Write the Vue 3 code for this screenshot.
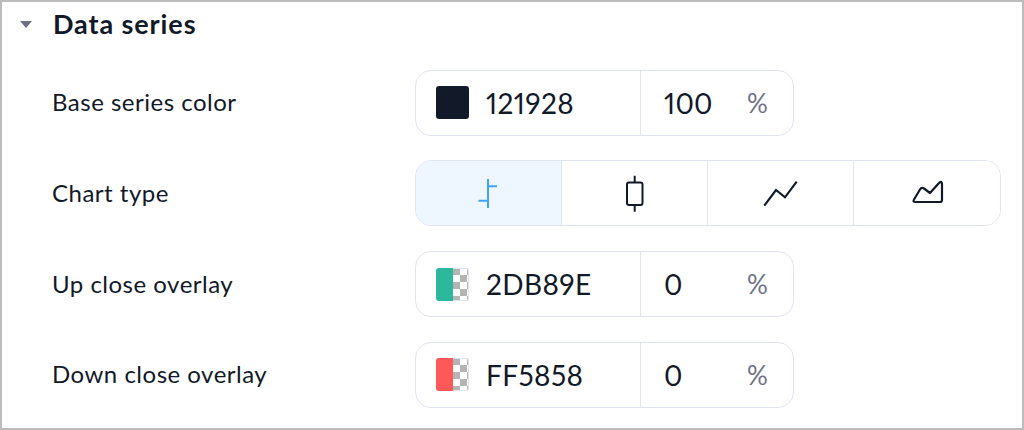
<template>
  <section class="panel">
    <header class="panel-head">
      <span class="caret"></span>
      <h2 class="title">Data series</h2>
    </header>

    <div class="rows">
      <div class="row">
        <label class="row-label">Base series color</label>
        <div class="field">
          <div class="color-part">
            <span class="swatch" style="background: #121928"></span>
            <span class="hex">121928</span>
          </div>
          <div class="alpha-part">
            <span class="alpha">100</span>
            <span class="percent">%</span>
          </div>
        </div>
      </div>

      <div class="row">
        <label class="row-label">Chart type</label>
        <div class="segments">
          <button class="segment active" aria-label="Bars">
            <svg width="36" height="36" viewBox="0 0 36 36" fill="none" stroke="currentColor" stroke-width="2">
              <path d="M17 4v29M17 11.300h9M7.500 25.700H17" />
            </svg>
          </button>
          <button class="segment" aria-label="Candles">
            <svg width="36" height="40" viewBox="0 0 36 40" fill="none" stroke="currentColor" stroke-width="2">
              <rect x="10" y="9.500" width="15.500" height="22.500" rx="2" />
              <path d="M17.700 2.700v6.800M17.700 32v6.700" />
            </svg>
          </button>
          <button class="segment" aria-label="Line">
            <svg width="36" height="36" viewBox="0 0 36 36" fill="none" stroke="currentColor" stroke-width="2.200">
              <path d="M1.300 30.700 13 15l9 7.300L33.700 6.700" />
            </svg>
          </button>
          <button class="segment" aria-label="Area">
            <svg width="36" height="36" viewBox="0 0 36 36" fill="none" stroke="currentColor" stroke-width="2.200" stroke-linejoin="round">
              <path d="M5 24.500 11 14.500Q12.500 12 15 13.500L21 18 30 8Q33 5.500 33 9V25Q33 27 31 27H6.500Q3.500 27 5 24.500Z" />
            </svg>
          </button>
        </div>
      </div>

      <div class="row">
        <label class="row-label">Up close overlay</label>
        <div class="field">
          <div class="color-part">
            <span class="swatch checker"><i style="background: #2db89e"></i></span>
            <span class="hex">2DB89E</span>
          </div>
          <div class="alpha-part">
            <span class="alpha">0</span>
            <span class="percent">%</span>
          </div>
        </div>
      </div>

      <div class="row">
        <label class="row-label">Down close overlay</label>
        <div class="field">
          <div class="color-part">
            <span class="swatch checker"><i style="background: #ff5858"></i></span>
            <span class="hex">FF5858</span>
          </div>
          <div class="alpha-part">
            <span class="alpha">0</span>
            <span class="percent">%</span>
          </div>
        </div>
      </div>
    </div>
  </section>
</template>

<script setup>
</script>

<style>
html,
body {
  margin: 0;
  background: #fff;
}
</style>

<style scoped>
.panel {
  box-sizing: border-box;
  width: 1024px;
  height: 430px;
  border: 2px solid #bcbcbc;
  background: #fff;
  color: #121928;
  font-family: Lato, "Noto Sans", sans-serif;
  font-variant-numeric: proportional-nums;
  overflow: hidden;
}

.panel-head {
  display: flex;
  align-items: center;
  height: 46px;
  padding-left: 18px;
}

.caret {
  width: 0;
  height: 0;
  margin-top: -1px;
  border-left: 6px solid transparent;
  border-right: 6px solid transparent;
  border-top: 7px solid #6e6f85;
}

.title {
  margin: -2px 0 0 21px;
  font-size: 27px;
  font-weight: 700;
  letter-spacing: 0.9px;
  line-height: 46px;
}

.rows {
  display: flex;
  flex-direction: column;
  gap: 24.67px;
  margin-top: 21.7px;
  padding-left: 51px;
}

.row {
  display: grid;
  grid-template-columns: 362px auto;
  justify-content: start;
  align-items: center;
}

.row-label {
  margin: -2px 0 0 -1px;
  font-size: 24px;
  letter-spacing: 0.5px;
}

.field,
.segments {
  box-sizing: border-box;
  display: flex;
  height: 66px;
  border: 1px solid #e0e4f0;
  border-radius: 16px;
  overflow: hidden;
}

.field {
  width: 379px;
}

.color-part {
  display: flex;
  align-items: center;
  width: 225px;
  padding-left: 20px;
  border-right: 1px solid #e0e4f0;
  box-sizing: border-box;
}

.swatch {
  display: block;
  width: 33px;
  height: 33px;
  border-radius: 3px;
  overflow: hidden;
}

.swatch.checker {
  background-color: #fff;
  background-image: conic-gradient(#fff 25%, #b4b4b4 0 50%, #fff 0 75%, #b4b4b4 0);
  background-size: 14px 14px;
  background-position: 3px 0;
  box-shadow: inset 0 0 0 1px #e0e4f0;
}

.swatch i {
  display: block;
  width: 17px;
  height: 100%;
}

.hex {
  margin-left: 17px;
  font-size: 28px;
  letter-spacing: 0.4px;
}

.alpha-part {
  display: flex;
  align-items: center;
  flex: 1;
  padding-left: 23px;
}

.alpha {
  width: 83px;
  font-size: 28px;
  letter-spacing: 0.3px;
}

.percent {
  font-size: 26px;
  color: #6e7188;
}

.segments {
  width: 586px;
}

.segment {
  display: flex;
  flex: 0 0 146px;
  align-items: center;
  justify-content: center;
  padding: 0;
  border: 0;
  border-right: 1px solid #e0e4f0;
  background: #fff;
  color: #121928;
}

.segment:last-child {
  border-right: 0;
}

.segment.active {
  background: #eef6ff;
  color: #3fa2ff;
}
</style>
